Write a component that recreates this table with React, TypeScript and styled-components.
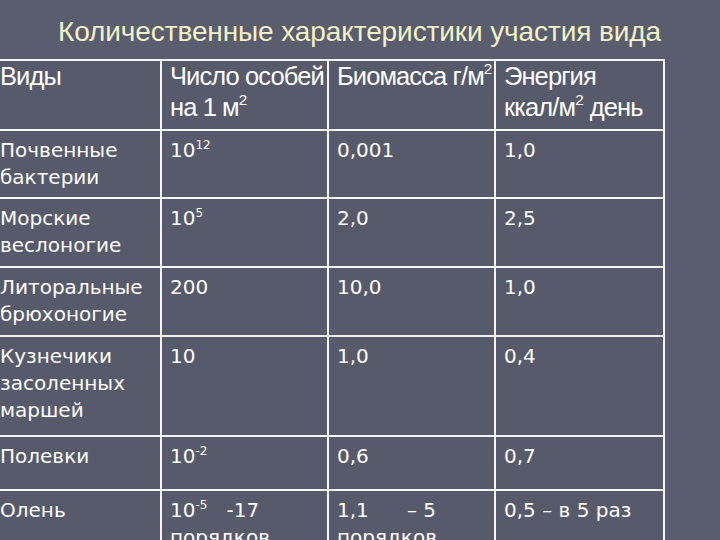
import React from 'react'
import styled, { createGlobalStyle } from 'styled-components'

const GlobalStyle = createGlobalStyle`
  html, body {
    margin: 0;
    padding: 0;
    background: #5a5d6e;
  }
  #root {
    width: 720px;
    height: 540px;
    overflow: hidden;
  }
`

const Page = styled.div`
  width: 720px;
  height: 540px;
  display: flex;
  flex-direction: column;
  background: #5a5d6e;
`
const Title = styled.h1`
  flex-shrink: 0;
  margin: 12px 0 0 58px;
  height: 47px;
  font-family: 'Liberation Sans', Arial, sans-serif;
  font-weight: normal;
  font-size: 28px;
  line-height: 40px;
  letter-spacing: -0.1px;
  color: #f3f3c9;
  white-space: nowrap;
`
const Table = styled.table`
  flex-shrink: 0;
  margin-left: -10px;
  width: 673px;
  table-layout: fixed;
  border-collapse: collapse;
  background: #575a6b;
  color: #ffffff;
`
const HeadRow = styled.tr`
  height: 70px;
`
const HeadCell = styled.th`
  padding: 0 8px;
  vertical-align: top;
  text-align: left;
  font-family: 'Liberation Sans', Arial, sans-serif;
  font-weight: normal;
  font-size: 25.5px;
  letter-spacing: -0.9px;
  line-height: 31px;
  border: 2px solid #f4f4f4;
  white-space: nowrap;
`
const Cell = styled.td`
  padding: 6px 8px 0;
  vertical-align: top;
  font-family: 'DejaVu Sans', Verdana, sans-serif;
  font-size: 20px;
  line-height: 27px;
  border: 2px solid #f4f4f4;
  white-space: pre-wrap;
`
const Sup = styled.sup`
  font-size: 0.6em;
  line-height: 0;
  letter-spacing: 0;
  vertical-align: 0.7em;
`

type Row = {
  name: string
  count: React.ReactNode
  mass: React.ReactNode
  energy: React.ReactNode
  height: number
}

const rows: Row[] = [
  { name: 'Почвенные бактерии', count: <>10<Sup>12</Sup></>, mass: '0,001', energy: '1,0', height: 68 },
  { name: 'Морские веслоногие', count: <>10<Sup>5</Sup></>, mass: '2,0', energy: '2,5', height: 69 },
  { name: 'Литоральные брюхоногие', count: '200', mass: '10,0', energy: '1,0', height: 69 },
  { name: 'Кузнечики засоленных маршей', count: '10', mass: '1,0', energy: '0,4', height: 100 },
  { name: 'Полевки', count: <>10<Sup>-2</Sup></>, mass: '0,6', energy: '0,7', height: 54 },
  {
    name: 'Олень',
    count: <>10<Sup>-5</Sup>{'   -17 порядков'}</>,
    mass: '1,1      – 5 порядков',
    energy: '0,5 – в 5 раз',
    height: 70,
  },
]

const App = () => {
  return (
    <Page>
      <GlobalStyle />
      <Title>Количественные характеристики участия вида</Title>
      <Table>
        <colgroup>
          <col style={{ width: 170 }} />
          <col style={{ width: 167 }} />
          <col style={{ width: 167 }} />
          <col style={{ width: 169 }} />
        </colgroup>
        <thead>
          <HeadRow>
            <HeadCell>Виды</HeadCell>
            <HeadCell>
              Число особей
              <br />
              на 1 м<Sup>2</Sup>
            </HeadCell>
            <HeadCell>
              Биомасса г/м<Sup>2</Sup>
            </HeadCell>
            <HeadCell>
              Энергия
              <br />
              ккал/м<Sup>2</Sup> день
            </HeadCell>
          </HeadRow>
        </thead>
        <tbody>
          {rows.map((r) => (
            <tr key={r.name} style={{ height: r.height }}>
              <Cell>{r.name}</Cell>
              <Cell>{r.count}</Cell>
              <Cell>{r.mass}</Cell>
              <Cell>{r.energy}</Cell>
            </tr>
          ))}
        </tbody>
      </Table>
    </Page>
  )
}

export default App
